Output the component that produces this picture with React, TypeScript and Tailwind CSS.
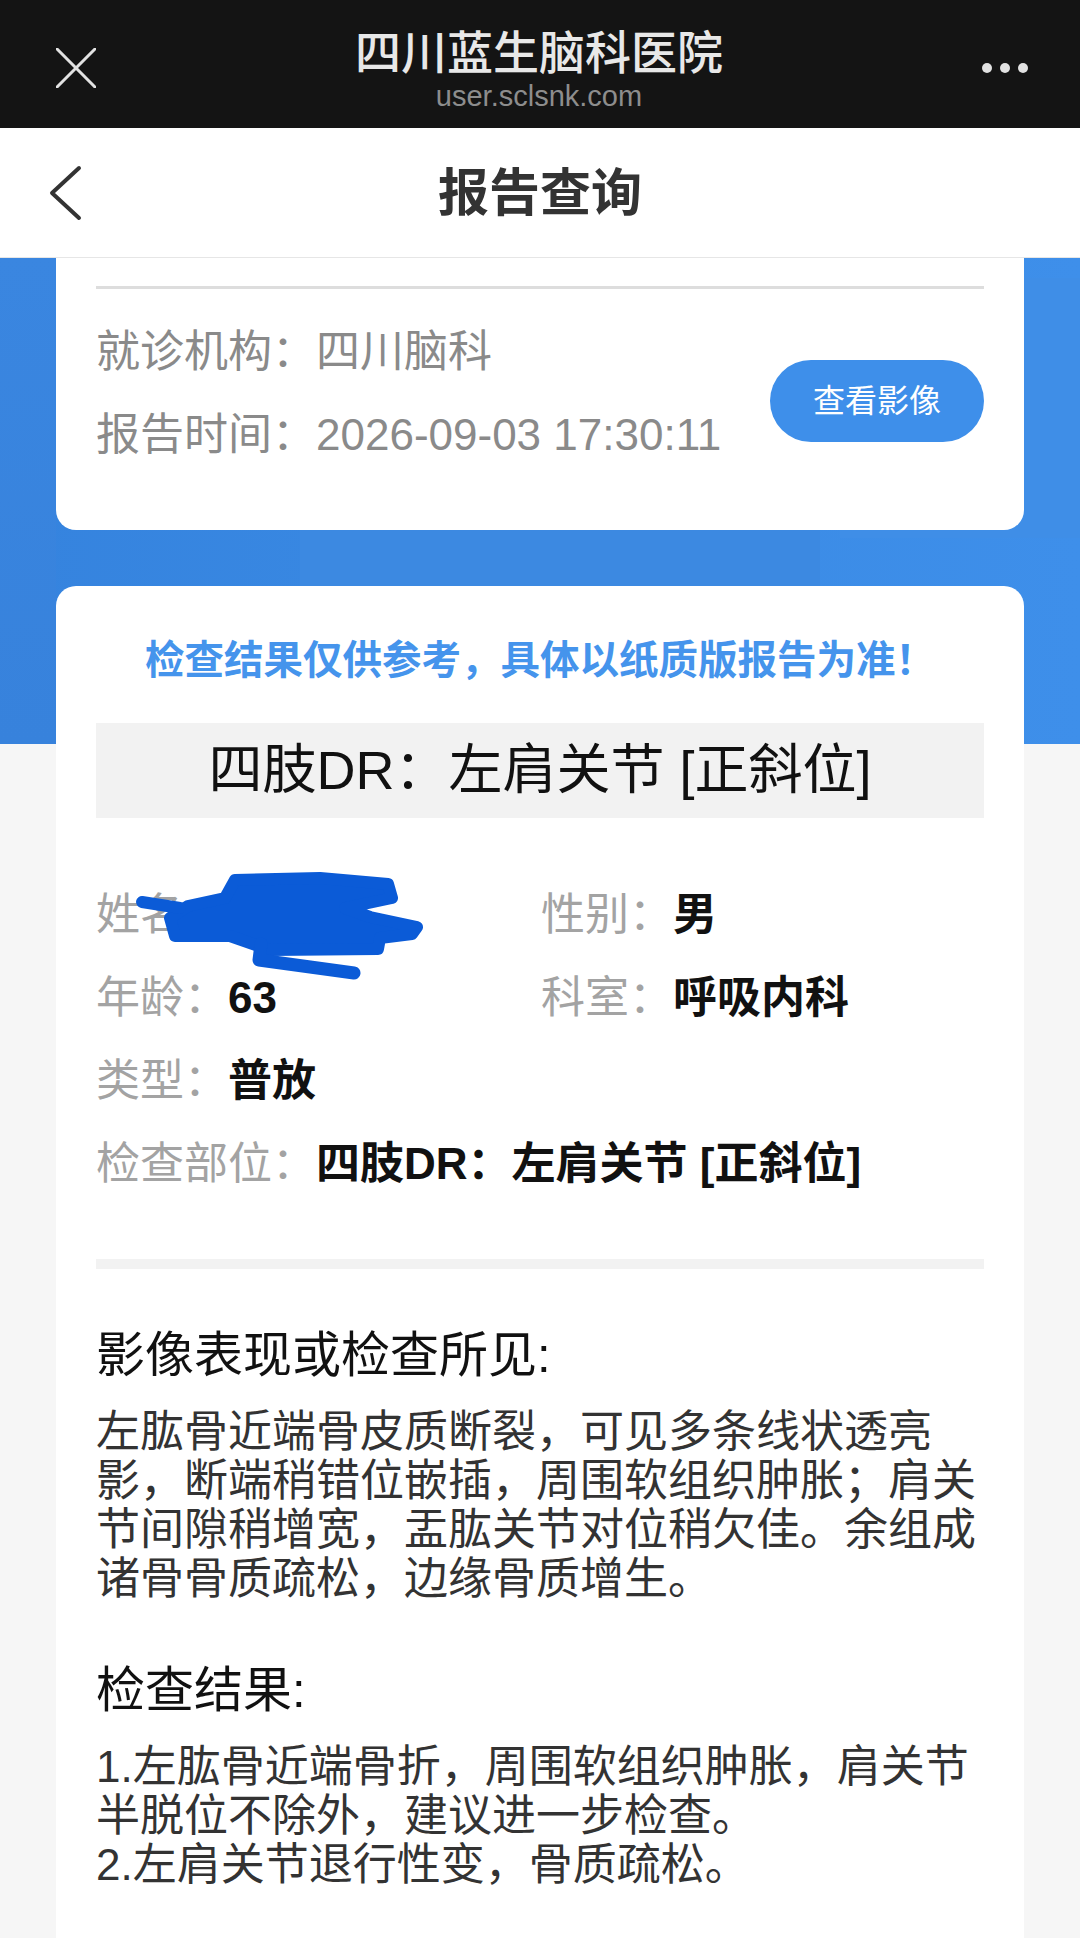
import React from 'react';

const font = { fontFamily: '"Liberation Sans", "Noto Sans CJK SC", sans-serif' };

const findings = [
  '左肱骨近端骨皮质断裂，可见多条线状透亮',
  '影，断端稍错位嵌插，周围软组织肿胀；肩关',
  '节间隙稍增宽，盂肱关节对位稍欠佳。余组成',
  '诸骨骨质疏松，边缘骨质增生。',
];

const results = [
  '1.左肱骨近端骨折，周围软组织肿胀，肩关节',
  '半脱位不除外，建议进一步检查。',
  '2.左肩关节退行性变，骨质疏松。',
];

function Scribble() {
  // redaction marks over the patient name
  return (
    <svg className="absolute left-[34px] top-[-15px] pointer-events-none" width="300" height="115" viewBox="0 0 300 115">
      <g stroke="#0b5bd7" strokeLinecap="round" strokeLinejoin="round" fill="#0b5bd7">
        <polygon
          points="105,10 190,8 258,14 262,28 215,38 240,47 287,57 282,64 250,68 248,79 140,80 100,66 45,66 40,48 58,36 95,28"
          strokeWidth="12"
        />
        <polyline points="12,32 50,38" strokeWidth="12" fill="none" />
        <polyline points="131,74 129,90 224,103" strokeWidth="13" fill="none" />
      </g>
    </svg>
  );
}

function InfoRow({ label, value, className = '' }: { label: string; value: string; className?: string }) {
  return (
    <div className={`flex items-center h-[60px] text-[44px] ${className}`}>
      <span className="text-[#a3a3a3]">{label}：</span>
      <span className="font-bold text-[#111]">{value}</span>
    </div>
  );
}

export default function App() {
  return (
    <div className="relative w-[1080px] h-[1938px] overflow-hidden bg-[#f6f6f6]" style={font}>
      {/* wechat header */}
      <div className="h-[128px] bg-[#141414] flex items-center justify-between px-[56px]">
        <svg width="40" height="40" viewBox="0 0 40 40" className="mt-[8px]">
          <path d="M1 1 L39 39 M39 1 L1 39" stroke="#e2e2e2" strokeWidth="3" strokeLinecap="round" />
        </svg>
        <div className="flex flex-col items-center mt-[10px]">
          <div className="text-[46px] leading-[54px] text-[#e8e8e8] font-medium">四川蓝生脑科医院</div>
          <div className="text-[29px] leading-[32px] text-[#8d8d8d]">user.sclsnk.com</div>
        </div>
        <div className="flex gap-[8px] items-center mr-[-4px] mt-[8px]">
          <span className="w-[10px] h-[10px] rounded-full bg-[#e2e2e2]" />
          <span className="w-[10px] h-[10px] rounded-full bg-[#e2e2e2]" />
          <span className="w-[10px] h-[10px] rounded-full bg-[#e2e2e2]" />
        </div>
      </div>

      {/* nav */}
      <div className="relative h-[130px] bg-white border-b border-[#e6e6e6] flex items-center justify-center">
        <svg width="40" height="60" viewBox="0 0 40 60" className="absolute left-[44px] top-[35px]">
          <path d="M35 5 L8 30 L35 55" stroke="#333" strokeWidth="4" fill="none" strokeLinecap="round" strokeLinejoin="round" />
        </svg>
        <div className="text-[51px] font-bold text-[#333] mt-[4px]">报告查询</div>
      </div>

      {/* content */}
      <div className="relative">
        <div className="absolute inset-x-0 top-0 h-[486px] bg-gradient-to-r from-[#3583de] via-[#3a8ae4] to-[#3e8fea] overflow-hidden">
          <div className="absolute left-[300px] top-[180px] w-[520px] h-[300px] rounded-[40px] bg-[#3c89e1]" />
          <div className="absolute left-[330px] top-[440px] w-[300px] h-[46px] bg-[#3883da]" />
          <div className="absolute left-[840px] top-[20px] w-[240px] h-[260px] bg-[#3f8ee7]" />
          <div className="absolute left-[0px] top-[0px] w-[56px] h-[486px] bg-gradient-to-b from-[#3a86e0] to-[#3782dc]" />
        </div>

        <div className="relative mx-[56px]">
          {/* card 1 */}
          <div className="bg-white rounded-b-[20px] px-[40px] pt-[28px] pb-[65px]">
            <div className="h-[3px] bg-[#dddddd]" />
            <div className="flex justify-between items-start pt-[33px]">
              <div className="flex flex-col gap-[23px] text-[44px] text-[#8a8a8a]">
                <div className="h-[60px] flex items-center">就诊机构：四川脑科</div>
                <div className="h-[60px] flex items-center">报告时间：2026-09-03 17:30:11</div>
              </div>
              <button className="mt-[38px] w-[214px] h-[82px] rounded-full bg-[#3e8fea] text-white text-[32px]">
                查看影像
              </button>
            </div>
          </div>

          {/* card 2 */}
          <div className="mt-[56px] bg-white rounded-t-[20px] px-[40px] pt-[49px] pb-[200px]">
            <div className="text-center text-[39.5px] leading-[50px] font-bold text-[#4594ec]">
              检查结果仅供参考，具体以纸质版报告为准！
            </div>
            <div className="mt-[38px] h-[95px] bg-[#f2f2f2] flex items-center justify-center text-[54px] text-[#111]">
              四肢DR：左肩关节 [正斜位]
            </div>

            <div className="mt-[67px] grid grid-cols-[445px_1fr] gap-y-[23px]">
              <div className="relative">
                <InfoRow label="姓名" value="" />
                <Scribble />
              </div>
              <InfoRow label="性别" value="男" />
              <InfoRow label="年龄" value="63" />
              <InfoRow label="科室" value="呼吸内科" />
              <InfoRow label="类型" value="普放" className="col-span-2" />
              <InfoRow label="检查部位" value="四肢DR：左肩关节 [正斜位]" className="col-span-2" />
            </div>

            <div className="mt-[65px] h-[10px] bg-[#f2f2f2]" />

            <div className="mt-[56px] text-[49px] leading-[60px] text-[#111]">影像表现或检查所见:</div>
            <div className="mt-[22px] text-[44px] leading-[49px] text-[#333]">
              {findings.map((l) => (
                <div key={l} className="whitespace-nowrap">{l}</div>
              ))}
            </div>

            <div className="mt-[57px] text-[49px] leading-[60px] text-[#111]">检查结果:</div>
            <div className="mt-[22px] text-[44px] leading-[49px] text-[#333]">
              {results.map((l) => (
                <div key={l} className="whitespace-nowrap">{l}</div>
              ))}
            </div>
          </div>
        </div>
      </div>
    </div>
  );
}
